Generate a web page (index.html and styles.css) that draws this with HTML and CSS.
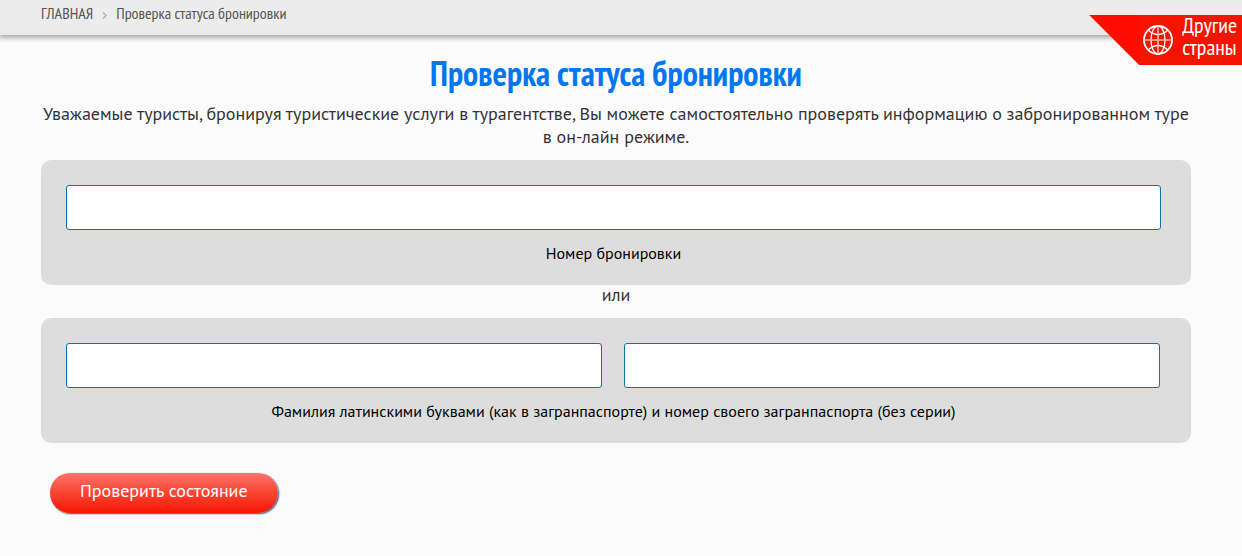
FILE: index.html
```html
<!DOCTYPE html>
<html lang="ru">
<head>
<meta charset="utf-8">
<title>Проверка статуса бронировки</title>
<link rel="stylesheet" href="styles.css">
</head>
<body>
<header class="topbar">
  <nav class="breadcrumbs" aria-label="Навигация">
    <a href="#">ГЛАВНАЯ</a>
    <svg class="separator" viewBox="0 0 5 7" aria-hidden="true"><path d="M1 .5l3 3-3 3"/></svg>
    <span>Проверка статуса бронировки</span>
  </nav>
</header>
<a class="countries" href="#">
  <svg class="globe" viewBox="0 0 30 30" aria-hidden="true">
    <circle cx="15" cy="15" r="14" stroke-width="1.8"/>
    <ellipse cx="15" cy="15" rx="7" ry="14"/>
    <path d="M5 5q10 9 20 0M5 25q10-9 20 0"/>
    <path class="axes" d="M15 1v28M1 15h28"/>
  </svg>
  <span>Другие<br>страны</span>
</a>
<main class="page">
  <h1 class="title">Проверка статуса бронировки</h1>
  <p class="intro">Уважаемые туристы, бронируя туристические услуги в турагентстве, Вы можете самостоятельно проверять информацию о забронированном туре в он-лайн режиме.</p>
  <form class="form">
    <div class="panel">
      <input class="field" id="booking" type="text">
      <label class="caption" for="booking">Номер бронировки</label>
    </div>
    <p class="or">или</p>
    <div class="panel">
      <div class="pair">
        <input class="field" id="surname" type="text" aria-labelledby="person">
        <input class="field" id="passport" type="text" aria-labelledby="person">
      </div>
      <label class="caption" id="person" for="surname">Фамилия латинскими буквами (как в загранпаспорте) и номер своего загранпаспорта (без серии)</label>
    </div>
    <button class="submit" type="button">Проверить состояние</button>
  </form>
</main>
</body>
</html>
```
FILE: styles.css
```css
* { box-sizing: border-box; }
body {
  margin: 0;
  background: #fbfbfb;
  color: #333;
  font-family: "PT Sans", "Noto Sans", sans-serif;
  font-size: 18px;
  line-height: 23px;
}
.topbar {
  padding: 3px 41px 12px;
  background: #ececec;
  box-shadow: 0 2px 5px 1px #aaa;
}
.breadcrumbs {
  display: flex;
  align-items: center;
  gap: 9px;
  color: #555;
  font-family: "PT Sans Narrow", "Liberation Sans Narrow", "Noto Sans", sans-serif;
  font-size: 16px;
  line-height: 20px;
}
.breadcrumbs a { color: inherit; text-decoration: none; }
.separator { width: 5px; height: 7px; margin-top: 5px; fill: none; stroke: #b0b0b0; stroke-width: 1.4; }
.countries {
  position: absolute;
  top: 15px;
  right: 0;
  display: flex;
  align-items: center;
  gap: 9px;
  height: 50px;
  padding: 0 5px 8px 54px;
  background: linear-gradient(90deg, #ff0c00 50px, #f41500 50px);
  clip-path: polygon(0 0, 100% 0, 100% 100%, 50px 100%);
  color: #fff;
  font-family: "PT Sans Narrow", "Liberation Sans Narrow", "Noto Sans", sans-serif;
  font-size: 22px;
  line-height: 22px;
  text-decoration: none;
}
.globe { width: 30px; height: 30px; margin-top: 8px; fill: none; stroke: #fff; stroke-width: 1.3; }
.axes { stroke: #ffb5ae; stroke-width: 1.6; }
.page { padding: 19px 51px 40px 41px; }
.title {
  margin: 0;
  color: #07e;
  font-family: "PT Sans Narrow", "Liberation Sans Narrow", "Noto Sans", sans-serif;
  font-size: 34px;
  line-height: 38px;
  text-align: center;
}
.intro { margin: 10px 0 12px; text-align: center; }
.or { margin: 0; padding-bottom: 13px; line-height: 20px; text-align: center; }
.panel {
  padding: 25px 30px 21px 25px;
  border-radius: 10px;
  background: #ddd;
}
.pair { display: grid; grid-template-columns: 1fr 1fr; gap: 22px; padding-right: 1px; }
.field {
  display: block;
  width: 100%;
  height: 45px;
  padding: 0 10px;
  border: 1px solid #0d72a8;
  border-radius: 3px;
  background: #fff;
  font: inherit;
}
.caption {
  display: block;
  padding-top: 12px;
  color: #000;
  font-size: 16px;
  line-height: 22px;
  text-align: center;
}
.submit {
  height: 40px;
  margin: 30px 9px 0;
  padding: 0 30px 5px;
  border: 0;
  border-radius: 20px;
  background: linear-gradient(#fb7468, #f71500);
  box-shadow: 1px 1px 2px #25508c;
  color: #fff;
  font: inherit;
}
```
